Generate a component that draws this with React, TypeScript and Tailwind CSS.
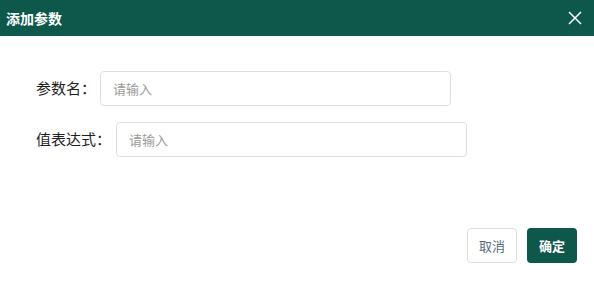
export default function App() {
  const font = { fontFamily: '"Noto Sans CJK SC", "Noto Sans", sans-serif' }
  return (
    <div className="w-[594px] h-[282px] bg-white flex flex-col" style={font}>
      {/* Header */}
      <div className="h-9 bg-[#0e574b] flex items-center justify-between pl-1.5 pr-3">
        <span className="text-white text-[14px] font-bold leading-none">添加参数</span>
        <button className="text-white">
          <svg width="14" height="14" viewBox="0 0 14 14" fill="none" stroke="currentColor" strokeWidth="1.5">
            <path d="M1 1L13 13M13 1L1 13" />
          </svg>
        </button>
      </div>

      {/* Form */}
      <div className="flex flex-col gap-4 pl-9 pt-[35px]">
        <div className="flex items-center">
          <label className="text-[15px] text-[#1f1f1f] mr-1">参数名：</label>
          <input
            type="text"
            placeholder="请输入"
            className="w-[351px] h-[35px] rounded border border-[#dcdfe6] px-3 text-[13px] placeholder:text-[#9a9a9a] outline-none"
          />
        </div>
        <div className="flex items-center">
          <label className="text-[15px] text-[#1f1f1f] mr-[5px]">值表达式：</label>
          <input
            type="text"
            placeholder="请输入"
            className="w-[351px] h-[35px] rounded border border-[#dcdfe6] px-3 text-[13px] placeholder:text-[#9a9a9a] outline-none"
          />
        </div>
      </div>

      {/* Footer */}
      <div className="flex justify-end gap-2.5 pr-[17px] mt-[71px]">
        <button className="w-[50px] h-[35px] rounded border border-[#dcdfe6] text-[13px] text-[#5a6a80] bg-white">取消</button>
        <button className="w-[50px] h-[35px] rounded bg-[#0e574b] text-[13px] text-white font-bold">确定</button>
      </div>
    </div>
  )
}
